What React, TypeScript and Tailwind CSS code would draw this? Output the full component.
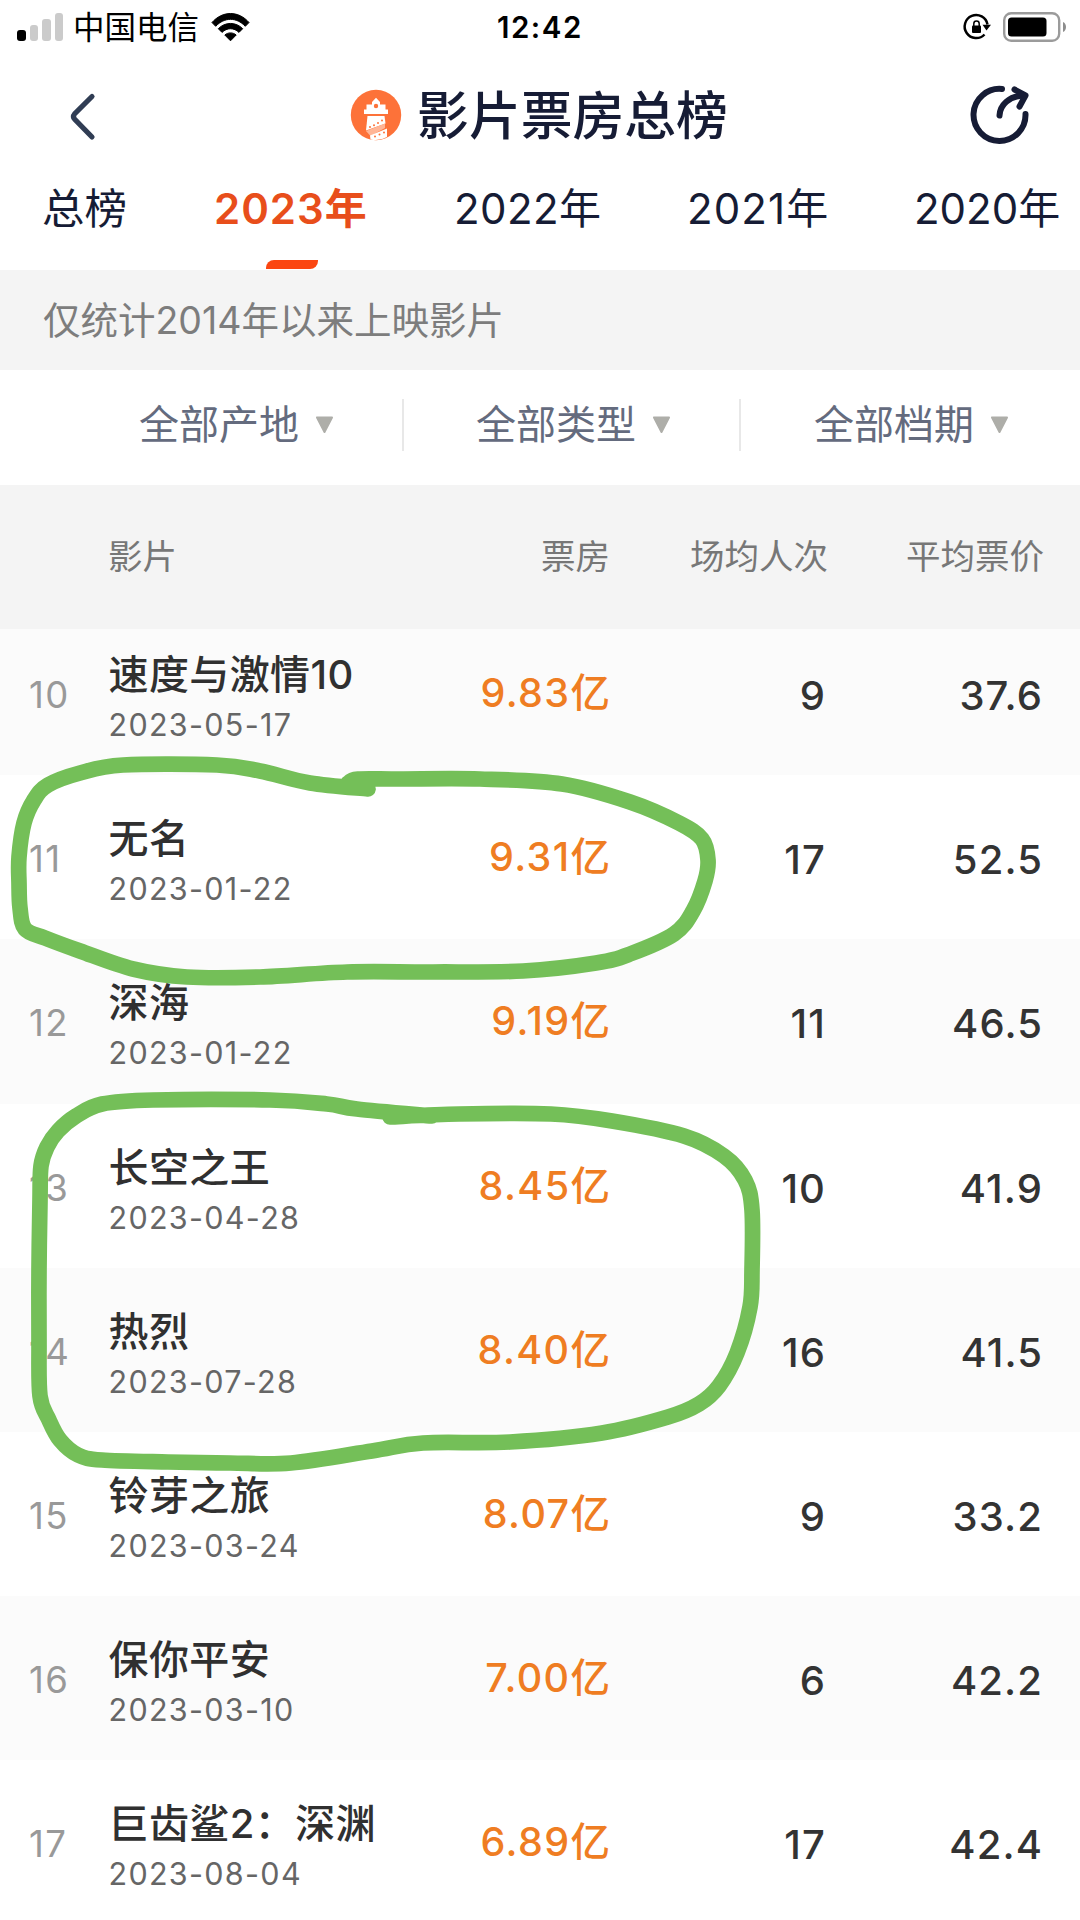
type Film = {
  rank: number;
  name: string;
  date: string;
  gross: string;
  crowd: number;
  price: string;
};

const films: Film[] = [
  { rank: 10, name: "速度与激情10", date: "2023-05-17", gross: "9.83", crowd: 9, price: "37.6" },
  { rank: 11, name: "无名", date: "2023-01-22", gross: "9.31", crowd: 17, price: "52.5" },
  { rank: 12, name: "深海", date: "2023-01-22", gross: "9.19", crowd: 11, price: "46.5" },
  { rank: 13, name: "长空之王", date: "2023-04-28", gross: "8.45", crowd: 10, price: "41.9" },
  { rank: 14, name: "热烈", date: "2023-07-28", gross: "8.40", crowd: 16, price: "41.5" },
  { rank: 15, name: "铃芽之旅", date: "2023-03-24", gross: "8.07", crowd: 9, price: "33.2" },
  { rank: 16, name: "保你平安", date: "2023-03-10", gross: "7.00", crowd: 6, price: "42.2" },
  { rank: 17, name: "巨齿鲨2：深渊", date: "2023-08-04", gross: "6.89", crowd: 17, price: "42.4" },
];

type Point = [number, number];

const inkUpper: Point[] = [
  [348, 783], [358, 779], [400, 779], [480, 779], [562, 784], [630, 802], [679, 823], [702, 839], [708, 860],
  [705, 881], [693, 911], [674, 934], [630, 954], [596, 963], [523, 971], [433, 972], [347, 972], [260, 977],
  [187, 977], [133, 969], [80, 951], [45, 938], [25, 929], [20, 908], [19, 883], [19, 857], [24, 823], [34, 800],
  [48, 785], [80, 773], [123, 765], [217, 765], [260, 771], [310, 783], [368, 789],
];

const inkLower: Point[] = [
  [390, 1117], [459, 1114], [551, 1114], [612, 1121], [684, 1136], [724, 1156], [745, 1180], [752, 1210],
  [752, 1270], [750, 1307], [737, 1353], [719, 1386], [699, 1404], [668, 1417], [602, 1433], [510, 1442],
  [423, 1443], [372, 1451], [291, 1463], [230, 1463], [168, 1462], [102, 1460], [78, 1455], [60, 1440],
  [49, 1420], [40, 1396], [39, 1340], [39, 1270], [40, 1200], [41, 1166], [47, 1147], [58, 1131], [76, 1116],
  [102, 1104], [153, 1100], [270, 1100], [327, 1104], [357, 1109], [432, 1116],
];

/** Catmull-Rom curve through all points, as cubic segments. */
function smooth(pts: Point[]): string {
  let d = `M${pts[0][0]} ${pts[0][1]}`;
  for (let i = 0; i < pts.length - 1; i++) {
    const a = pts[Math.max(i - 1, 0)];
    const b = pts[i];
    const c = pts[i + 1];
    const e = pts[Math.min(i + 2, pts.length - 1)];
    d += `C${b[0] + (c[0] - a[0]) / 6} ${b[1] + (c[1] - a[1]) / 6} ${c[0] - (e[0] - b[0]) / 6} ${c[1] - (e[1] - b[1]) / 6} ${c[0]} ${c[1]}`;
  }
  return d;
}

function StatusBar() {
  return (
    <div className="relative flex h-[54px] items-center justify-between pl-[17px] pr-[13px] text-black">
      <div className="flex items-center">
        <div className="flex h-[28px] items-end gap-1">
          <span className="h-[11px] w-[8.5px] rounded-[3px] bg-black" />
          <span className="h-[16px] w-[8.5px] rounded-[3px] bg-[#cbcbcb]" />
          <span className="h-[22px] w-[8.5px] rounded-[3px] bg-[#cbcbcb]" />
          <span className="h-[28px] w-[8.5px] rounded-[3px] bg-[#cbcbcb]" />
        </div>
        <span className="ml-[10px] pt-[1px] text-[31.5px] leading-[54px]">中国电信</span>
        <svg className="ml-[12px]" width="39" height="30" viewBox="0 0 39 30">
          <path d="M1 10.5C11.500-1.500 27.500-1.500 38 10.500L34.300 14.300C25.500 5 13.500 5 4.700 14.300Z" fill="#000" stroke="#000" strokeLinejoin="round" />
          <path d="M7.300 16.700C14.200 9.700 24.800 9.700 31.700 16.700L28 20.400C23 15.500 16 15.500 11 20.400Z" fill="#000" stroke="#000" strokeLinejoin="round" />
          <path d="M13.800 23C17 20.200 22 20.200 25.200 23L19.500 28.800Z" fill="#000" stroke="#000" strokeLinejoin="round" />
        </svg>
      </div>
      <span className="absolute left-[497px] top-0 text-[29.500px] font-semibold leading-[54px] tracking-[1.500px]">12:42</span>
      <div className="flex items-center">
        <svg width="30" height="30" viewBox="0 0 30 30">
          <path d="M22.500 22.500A11.500 11.500 0 1 1 25.500 12.500" fill="none" stroke="#000" strokeWidth="2.500" />
          <path d="M20.500 12.800h8.500l-4.500 5.600z" fill="#000" />
          <rect x="10" y="13.500" width="9" height="7.500" rx="1" fill="#000" />
          <path d="M11.800 14v-2.300a2.700 2.700 0 0 1 5.400 0v2.300" fill="none" stroke="#000" strokeWidth="1.500" />
        </svg>
        <svg className="ml-[11px]" width="64" height="30" viewBox="0 0 64 30">
          <rect x="1.200" y="1.200" width="55" height="27.600" rx="7" fill="none" stroke="#9b9b9b" strokeWidth="2.400" />
          <rect x="5" y="5.500" width="38.500" height="19" rx="3.500" fill="#000" />
          <path d="M60 10c4 1.800 4 8.200 0 10z" fill="#8d8d8d" />
        </svg>
      </div>
    </div>
  );
}

function TitleBar() {
  return (
    <div className="flex h-[120px] items-center justify-between pl-[66px] pr-[48px] pt-[3px]">
      <svg width="32" height="50" viewBox="0 0 32 50">
        <path d="M26 5.500L8.500 23Q6.500 25.500 8.500 28L26 46" fill="none" stroke="#303d54" strokeWidth="5.200" strokeLinecap="round" />
      </svg>
      <div className="ml-[12px] flex items-center">
        <svg className="mb-[2px]" width="52" height="52" viewBox="0 0 52 52">
          <circle cx="26" cy="26" r="25.200" fill="#fd7239" />
          <path d="M14 25v-4.500h2.500v-5h5.500v-2.500l4-4.300 4 4.300v2.500h5.500v5H38V25z" fill="#fff" />
          <circle cx="26" cy="17" r="2.200" fill="#fd7239" />
          <path d="M17.500 27H34.500l1 7.500L16 41.500z" fill="#fff" />
          <path d="M16 42l19-7.500v4.500l-14.500 8z" fill="#ffb596" />
          <path d="M20 46.500L37 39.500v8.500Q29 52.500 20.500 50.500z" fill="#fff" />
          <g fill="#fd7239">
            <circle cx="20" cy="38" r="1" /><circle cx="24" cy="36.200" r="1" /><circle cx="28" cy="34" r="1" /><circle cx="32" cy="31.500" r="1" />
            <circle cx="25" cy="47.500" r="1" /><circle cx="29.500" cy="45.500" r="1" /><circle cx="34" cy="43.500" r="1" />
          </g>
        </svg>
        <h1 className="ml-[15px] text-[51.800px] font-medium leading-[70px] text-[#161c35]">影片票房总榜</h1>
      </div>
      <svg className="mb-[3px]" width="64" height="64" viewBox="0 0 64 64" fill="none" stroke="#161c35" strokeWidth="6" strokeLinecap="round" strokeLinejoin="round">
        <path d="M34 7A26 26 0 1 0 57.500 32" />
        <path d="M31.500 33.500C32 23 41 14 56 13.500" />
        <path d="M46.500 7.500L57.500 13.500 51.500 24.500" />
      </svg>
    </div>
  );
}

function Tabs() {
  return (
    <nav className="flex h-[96px] items-start whitespace-nowrap pl-[42px] text-[42px] leading-[70px] text-[#161c35]">
      <span className="w-[172px] text-[42.500px]">总榜</span>
      <span className="flex w-[240px] flex-col text-[#e84e1b]">
        <span className="font-semibold tracking-[1px]">2023年</span>
        <span className="ml-[52px] mt-[16px] h-[9px] w-[52px] rounded-br-[8px] rounded-tl-[8px] bg-[#fb4611]" />
      </span>
      <span className="w-[233px] tracking-[0.400px]">2022年</span>
      <span className="w-[227px] tracking-[1.100px]">2021年</span>
      <span>2020年</span>
    </nav>
  );
}

function Filter({ label, last }: { label: string; last?: boolean }) {
  return (
    <div className={last ? "flex h-[52px] w-[337px] items-center justify-center" : "flex h-[52px] w-[337px] items-center justify-center border-r-[2px] border-[#e8e8e8]"}>
      <span className="ml-[4px] text-[40px] leading-[52px] text-[#646b7e]">{label}</span>
      <svg className="ml-[16px]" width="19" height="18" viewBox="0 0 19 18">
        <path d="M2 1.500h15L9.500 16z" fill="#aeaea9" stroke="#aeaea9" strokeWidth="2" strokeLinejoin="round" />
      </svg>
    </div>
  );
}

function FilmRow({ film, shaded }: { film: Film; shaded: boolean }) {
  return (
    <div className={shaded ? "flex h-[164.200px] shrink-0 bg-[#fbfbfb] pt-[37px]" : "flex h-[164.200px] shrink-0 bg-white pt-[37px]"}>
      <span className="w-[108px] pl-[29px] pt-[22px] text-[36.500px] leading-[50px] tracking-[1.500px] text-[#999]">{film.rank}</span>
      <div className="flex w-[292px] flex-col pl-[0.500px]">
        <span className="whitespace-nowrap text-[40px] font-medium leading-[54px] tracking-[0.400px] text-[#303030]">{film.name}</span>
        <span className="pt-[3px] text-[30.500px] leading-[40px] tracking-[1.300px] text-[#666]">{film.date}</span>
      </div>
      <span className="w-[210px] pt-[18px] text-right text-[39.500px] font-medium leading-[54px] text-[#ef7d22]">
        <span className="tracking-[1.400px]">{film.gross}</span>亿
      </span>
      <span className="w-[216px] pt-[21px] text-right text-[40px] font-medium leading-[54px] tracking-[1.100px] text-[#333]">{film.crowd}</span>
      <span className="w-[217px] pt-[21px] text-right text-[40px] font-medium leading-[54px] tracking-[1.100px] text-[#333]">{film.price}</span>
    </div>
  );
}

export default function App() {
  return (
    <div className="relative flex h-[1920px] w-[1080px] flex-col overflow-hidden bg-white font-['Inter','Noto_Sans_CJK_SC',sans-serif]">
      <StatusBar />
      <TitleBar />
      <Tabs />
      <div className="h-[100px] shrink-0 bg-[#f4f4f4] pl-[43px] text-[37.500px] leading-[102px] text-[#7d7d7d]">仅统计2014年以来上映影片</div>
      <div className="flex h-[115px] shrink-0 items-center pb-[5px] pl-[67px]">
        <Filter label="全部产地" />
        <Filter label="全部类型" />
        <Filter label="全部档期" last />
      </div>
      <div className="flex h-[144px] shrink-0 bg-[#f4f4f4] text-[34.500px] leading-[144px] text-[#777]">
        <span className="w-[400px] pl-[108px]">影片</span>
        <span className="w-[210px] text-right">票房</span>
        <span className="w-[218px] text-right">场均人次</span>
        <span className="w-[216px] text-right">平均票价</span>
      </div>
      <div className="flex h-[1291px] flex-col justify-start overflow-hidden">
        <div className="-mt-[18px] flex flex-col">
          {films.map((film, i) => (
            <FilmRow key={film.rank} film={film} shaded={i % 2 === 0} />
          ))}
        </div>
      </div>
      <svg className="pointer-events-none absolute left-0 top-0" width="1080" height="1920" viewBox="0 0 1080 1920" fill="none" stroke="#74bf58" strokeWidth="15.700" strokeLinecap="round" strokeLinejoin="round">
        <path d={smooth(inkUpper)} />
        <path d={smooth(inkLower)} />
      </svg>
    </div>
  );
}
